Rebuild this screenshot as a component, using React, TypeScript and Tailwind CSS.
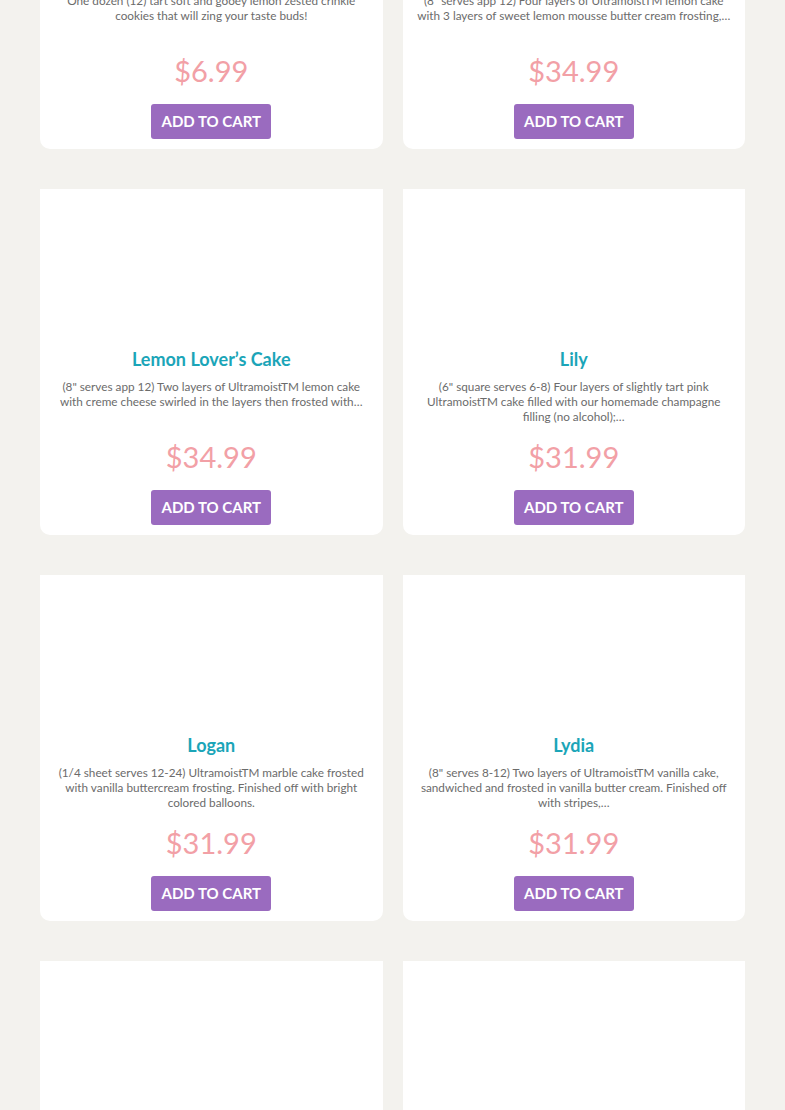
import React from "react";

type Product = {
  name: string;
  desc: string;
  price: string;
};

const PRODUCTS: Product[] = [
  {
    name: "Lemon Crinkle Cookies",
    desc: "One dozen (12) tart soft and gooey lemon zested crinkle cookies that will zing your taste buds!",
    price: "$6.99",
  },
  {
    name: "Lemon Dream Cake",
    desc: "(8\" serves app 12) Four layers of UltramoistTM lemon cake with 3 layers of sweet lemon mousse butter cream frosting,…",
    price: "$34.99",
  },
  {
    name: "Lemon Lover’s Cake",
    desc: "(8\" serves app 12) Two layers of UltramoistTM lemon cake with creme cheese swirled in the layers then frosted with…",
    price: "$34.99",
  },
  {
    name: "Lily",
    desc: "(6\" square serves 6-8) Four layers of slightly tart pink UltramoistTM cake filled with our homemade champagne filling (no alcohol);…",
    price: "$31.99",
  },
  {
    name: "Logan",
    desc: "(1/4 sheet serves 12-24) UltramoistTM marble cake frosted with vanilla buttercream frosting. Finished off with bright colored balloons.",
    price: "$31.99",
  },
  {
    name: "Lydia",
    desc: "(8\" serves 8-12) Two layers of UltramoistTM vanilla cake, sandwiched and frosted in vanilla butter cream. Finished off with stripes,…",
    price: "$31.99",
  },
  {
    name: "Madison",
    desc: "(8\" serves 8-12) Two layers of UltramoistTM chocolate cake frosted in vanilla butter cream.",
    price: "$31.99",
  },
  {
    name: "Maggie",
    desc: "(6\" serves 6-8) Three layers of UltramoistTM strawberry cake frosted in pink butter cream.",
    price: "$29.99",
  },
];

export default function App() {
  return (
    <div className="min-h-screen bg-[#f3f2ee] overflow-hidden font-['Lato','Open_Sans',sans-serif]">
      <div className="mt-[-197px] px-10 pb-10 grid grid-cols-2 gap-x-5 gap-y-10">
        {PRODUCTS.map((p) => (
          <ProductCard key={p.name} product={p} />
        ))}
      </div>
    </div>
  );
}

function ProductCard({ product }: { product: Product }) {
  return (
    <div className="h-[346px] bg-white rounded-b-[10px] flex flex-col items-center text-center px-3 pb-[10px]">
      {/* image slot, empty in the capture */}
      <div className="h-[150px] w-full shrink-0" />
      <h3 className="mt-2 text-[18px] leading-6 font-bold text-[#1ba5b8]">
        {product.name}
      </h3>
      <p className="mt-2 h-[45px] text-[11.75px] leading-[15px] text-[#6b6b6b] overflow-hidden">
        {product.desc}
      </p>
      <div className="mt-[14px] text-[29px] leading-[38px] text-[#f2a0a6]">
        {product.price}
      </div>
      <button className="mt-[14px] h-[35px] px-[10px] rounded-[3px] bg-[#9a6bbf] text-white text-[15px] font-bold leading-none">
        ADD TO CART
      </button>
    </div>
  );
}
